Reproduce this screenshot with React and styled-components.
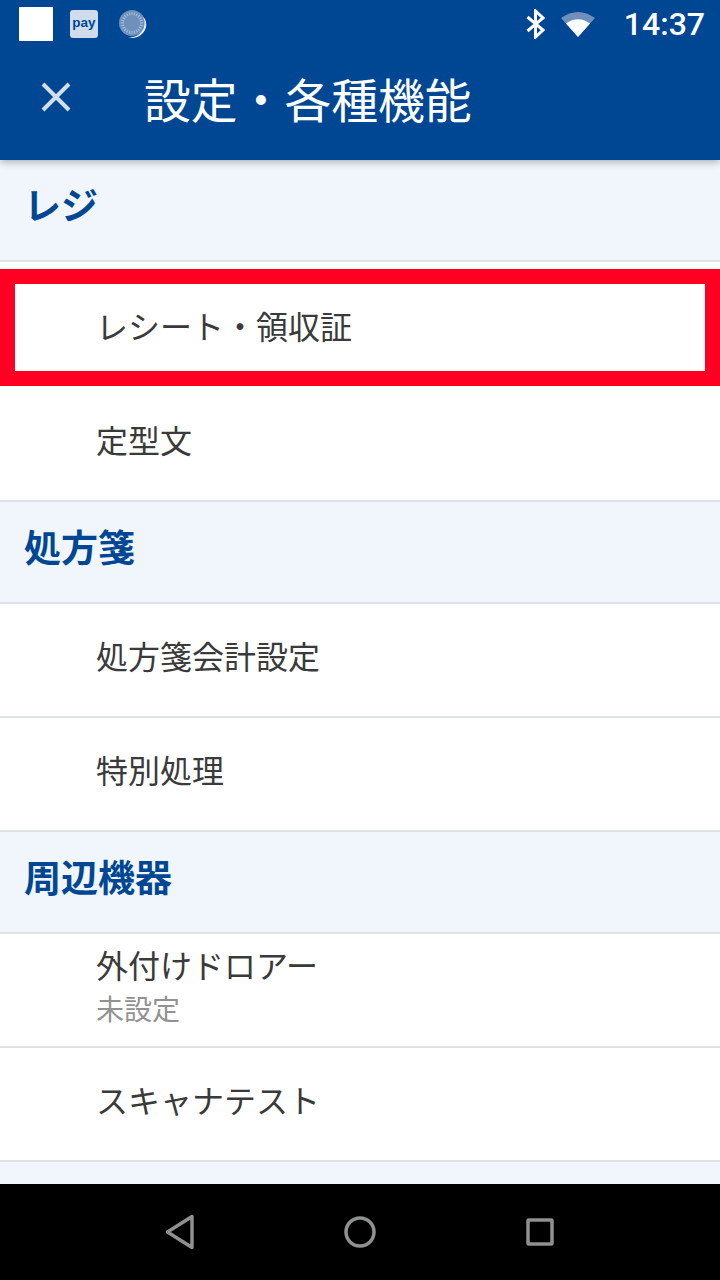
import React from "react";
import styled, { createGlobalStyle } from "styled-components";

const Global = createGlobalStyle`
  html, body { margin: 0; padding: 0; background: #fff; }
  body { font-family: "Noto Sans CJK JP", "Noto Sans", sans-serif; }
  * { box-sizing: border-box; }
`;

const Screen = styled.div`
  width: 720px;
  height: 1280px;
  display: flex;
  flex-direction: column;
  overflow: hidden;
  background: #fff;
`;

const TopArea = styled.header`
  height: 160px;
  flex: none;
  background: #004793;
  box-shadow: 0 2px 8px rgba(0, 0, 0, 0.3);
  position: relative;
  z-index: 2;
  display: flex;
  flex-direction: column;
`;

const StatusBar = styled.div`
  height: 48px;
  display: flex;
  align-items: center;
  padding: 0 15px 0 19px;
`;

const WhiteSquare = styled.div`
  width: 34px;
  height: 34px;
  background: #fff;
  margin-right: 17px;
`;

const PayIcon = styled.div`
  width: 28px;
  height: 28px;
  border-radius: 3px;
  background: #cfdcec;
  color: #004793;
  font-family: "Liberation Sans", sans-serif;
  font-weight: 700;
  font-size: 13.5px;
  line-height: 26px;
  text-align: center;
  margin-right: 20px;
`;

const Spacer = styled.div`
  flex: 1;
`;

const Clock = styled.span`
  font-family: Roboto, sans-serif;
  font-size: 32px;
  font-weight: 500;
  color: #fff;
  line-height: 48px;
  margin-left: 28px;
`;

const TitleBar = styled.div`
  flex: 1;
  display: flex;
  align-items: center;
  padding: 0 0 12px 40px;
`;

const CloseIcon = styled.svg`
  width: 32px;
  height: 32px;
  flex: none;
  margin-right: 72px;
  position: relative;
  top: -1px;
`;

const Title = styled.h1`
  margin: 0;
  font-size: 46.8px;
  font-weight: 400;
  color: #fff;
  line-height: 60px;
  white-space: nowrap;
`;

const List = styled.main`
  flex: 1;
  min-height: 0;
  overflow: hidden;
`;

const Section = styled.h2`
  margin: 0;
  height: 102px;
  padding: 0 0 12px 24px;
  display: flex;
  align-items: center;
  background: #f0f6fc;
  border-bottom: 2px solid #e0e3e4;
  color: #004793;
  font-size: 37px;
  font-weight: 700;
  line-height: 1;
`;

const Row = styled.div`
  height: 114px;
  padding: 0 0 10px 96px;
  display: flex;
  flex-direction: column;
  justify-content: center;
  background: #fff;
  border-bottom: 2px solid #e0e3e4;
`;

const Highlight = styled.div`
  height: 117px;
  margin: 7px 0 2px;
  border: 15px solid #ff0022;
  display: flex;
  align-items: center;
  padding: 0 0 5px 81px;
  background: #fff;
`;

const RowLabel = styled.span`
  font-size: 32px;
  color: #3a3a3a;
  line-height: 40px;
  white-space: nowrap;
`;

const RowSub = styled.span`
  font-size: 28px;
  color: #929292;
  line-height: 32px;
  margin-top: 8px;
`;

const StackedRow = styled(Row)`
  padding-bottom: 12px;
`;

const NavBar = styled.nav`
  height: 96px;
  flex: none;
  background: #000;
  position: relative;
  z-index: 3;
  display: flex;
  align-items: center;
  justify-content: center;
  gap: 128px;
`;

const NavIcon = styled.svg`
  width: 52px;
  height: 52px;
  fill: none;
  stroke: #8f9090;
  stroke-width: 3.5;
  stroke-linejoin: round;
`;

function ProgressIcon() {
  const ticks = Array.from({ length: 24 }, (_, i) => i * 15);
  return (
    <svg width="30" height="30" viewBox="0 0 30 30">
      <circle cx="14" cy="14" r="13" fill="#6f90bd" />
      <path d="M27 10 A13.5 13.5 0 0 1 10 28 A14 14 0 0 0 25 8 Z" fill="#e6edf5" />
      {ticks.map((a) => (
        <line key={a} x1="14" y1="3" x2="14" y2="6" stroke="#a9bfdb" strokeWidth="1" transform={`rotate(${a} 14 14)`} />
      ))}
    </svg>
  );
}

export default function App() {
  return (
    <Screen>
      <Global />
      <TopArea>
        <StatusBar>
          <WhiteSquare />
          <PayIcon>pay</PayIcon>
          <ProgressIcon />
          <Spacer />
          <svg width="20" height="30" viewBox="0 0 20 30" fill="none" stroke="#fff" strokeWidth="3" strokeLinejoin="miter">
            <path d="M1.5 8 L17 21 L9.5 28 V2 L17 9 L1.5 22" />
          </svg>
          <svg width="36" height="26" viewBox="0 0 36 26" style={{ marginLeft: 14 }}>
            <path d="M1 7 Q18 -5 35 7 L18 26 Z" fill="#6f90bd" />
            <path d="M6 12.5 Q18 4 30 12.5 L18 26 Z" fill="#fff" />
          </svg>
          <Clock>14:37</Clock>
        </StatusBar>
        <TitleBar>
          <CloseIcon viewBox="0 0 32 32" fill="none" stroke="#d3deeb" strokeWidth="4">
            <path d="M3 3 L29 29 M29 3 L3 29" />
          </CloseIcon>
          <Title>設定・各種機能</Title>
        </TitleBar>
      </TopArea>
      <List>
        <Section>レジ</Section>
        <Highlight><RowLabel>レシート・領収証</RowLabel></Highlight>
        <Row><RowLabel>定型文</RowLabel></Row>
        <Section>処方箋</Section>
        <Row><RowLabel>処方箋会計設定</RowLabel></Row>
        <Row><RowLabel>特別処理</RowLabel></Row>
        <Section>周辺機器</Section>
        <StackedRow>
          <RowLabel>外付けドロアー</RowLabel>
          <RowSub>未設定</RowSub>
        </StackedRow>
        <Row><RowLabel>スキャナテスト</RowLabel></Row>
        <Section />
      </List>
      <NavBar>
        <NavIcon viewBox="0 0 52 52"><path d="M12.5 26 L37 10.5 V41.5 Z" transform="translate(1 0)" /></NavIcon>
        <NavIcon viewBox="0 0 52 52"><circle cx="26" cy="26" r="14" /></NavIcon>
        <NavIcon viewBox="0 0 52 52"><rect x="14" y="14" width="24" height="24" rx="1" /></NavIcon>
      </NavBar>
    </Screen>
  );
}
